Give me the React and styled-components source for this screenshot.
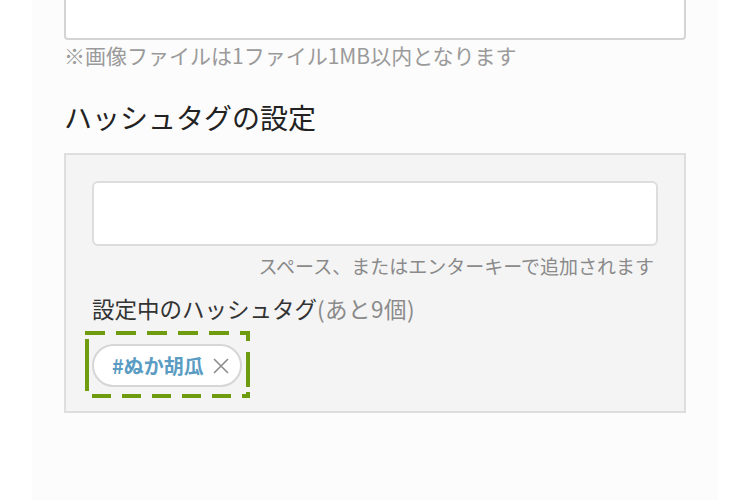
import React from "react";
import styled, { createGlobalStyle } from "styled-components";

const GlobalStyle = createGlobalStyle`
  body {
    margin: 0;
    background: #ffffff;
    font-family: "Noto Sans CJK JP", "Noto Sans", sans-serif;
  }
`;

const Page = styled.div`
  width: 686px;
  min-height: 500px;
  margin: 0 auto;
  padding: 0 32px;
  box-sizing: border-box;
  background: #fcfcfc;
  overflow: hidden;
`;

const ImageBox = styled.div`
  height: 60px;
  margin-top: -20px;
  border: 2px solid #d4d4d4;
  border-radius: 0 0 4px 4px;
  background: #ffffff;
  box-sizing: border-box;
`;

const Note = styled.p`
  margin: 0;
  font-size: 21px;
  line-height: 30px;
  color: #9a9a9a;
`;

const Heading = styled.h2`
  margin: 27px 0 0;
  font-size: 28px;
  font-weight: 400;
  line-height: 40px;
  color: #222222;
`;

const Panel = styled.div`
  margin-top: 16px;
  padding: 26px 26px 17px;
  border: 2px solid #dedede;
  background: #f4f4f4;
`;

const TagInput = styled.input`
  display: block;
  width: 100%;
  height: 65px;
  box-sizing: border-box;
  border: 2px solid #dddddd;
  border-radius: 6px;
  background: #ffffff;
  outline: none;
`;

const Helper = styled.p`
  margin: 6px 0 0;
  padding-right: 4px;
  text-align: right;
  font-size: 19px;
  line-height: 28px;
  color: #8a8a8a;
`;

const Label = styled.p`
  margin: 12px 0 0;
  font-size: 22.5px;
  line-height: 32px;
  color: #333333;

  span {
    color: #8a8a8a;
    letter-spacing: 0.5px;
  }
`;

const TagList = styled.div`
  display: flex;
  gap: 10px;
  margin-top: 11px;
`;

// dashed focus ring drawn over the tag
const green = "#6f9b0e";

const FocusRing = styled.div`
  position: relative;
  display: inline-flex;
  margin-left: -3px;
  padding: 9px 4px 7px 3px;

  &::before {
    content: "";
    position: absolute;
    inset: -4px;
    pointer-events: none;
    background:
      linear-gradient(90deg, ${green} 20px, transparent 20px) 0 0 / 31px 4px repeat-x,
      linear-gradient(90deg, ${green} 19px, transparent 19px) 7px 100% / 30px 4px repeat-x,
      linear-gradient(180deg, ${green} 0 4px, transparent 4px 8px, ${green} 8px 60px, transparent 60px) 0 0 / 4px 100% no-repeat,
      linear-gradient(180deg, ${green} 0 10px, transparent 10px 21px, ${green} 21px 56px, transparent 56px 61px, ${green} 61px) 100% 0 / 4px 100% no-repeat;
  }
`;

const Chip = styled.div`
  display: inline-flex;
  align-items: center;
  gap: 9px;
  height: 43px;
  padding: 0 11px 0 18px;
  border: 2px solid #d6d6d6;
  border-radius: 22px;
  background: #ffffff;
  box-sizing: border-box;
`;

const ChipText = styled.span`
  font-size: 20px;
  font-weight: 700;
  color: #5a9cc2;
`;

const CloseIcon = () => (
  <svg width="16" height="16" viewBox="0 0 16 16">
    <path d="M1 1L15 15M15 1L1 15" stroke="#8c8c8c" strokeWidth="1.6" fill="none" />
  </svg>
);

export default function App() {
  return (
    <>
      <GlobalStyle />
      <Page>
        <ImageBox />
        <Note>※画像ファイルは1ファイル1MB以内となります</Note>
        <Heading>ハッシュタグの設定</Heading>
        <Panel>
          <TagInput type="text" />
          <Helper>スペース、またはエンターキーで追加されます</Helper>
          <Label>
            設定中のハッシュタグ<span>(あと9個)</span>
          </Label>
          <TagList>
            <FocusRing>
              <Chip>
                <ChipText>#ぬか胡瓜</ChipText>
                <CloseIcon />
              </Chip>
            </FocusRing>
          </TagList>
        </Panel>
      </Page>
    </>
  );
}
